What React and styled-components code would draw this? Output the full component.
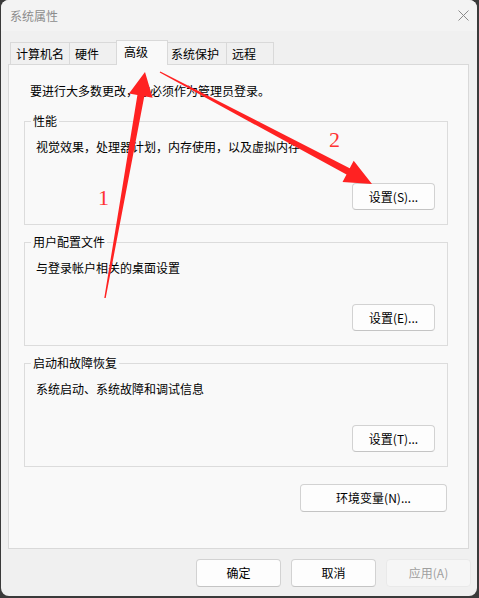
import React from 'react';
import styled, { createGlobalStyle } from 'styled-components';

const FONT = `"Noto Sans CJK SC", "Microsoft YaHei", "Noto Sans", sans-serif`;

const Global = createGlobalStyle`
  html, body { margin: 0; padding: 0; background: #3a3a3a; }
  body { width: 479px; height: 598px; overflow: hidden; }
  *, *::before, *::after { box-sizing: border-box; }
`;

const Stage = styled.div`
  position: relative;
  width: 479px;
  height: 598px;
  padding: 0 2px 2px 1px;
  font-family: ${FONT};
  font-size: 12px;
  color: #000;
`;

const Window = styled.div`
  width: 476px;
  height: 596px;
  background: #f0f0f0;
  border-radius: 8px;
  overflow: hidden;
  display: flex;
  flex-direction: column;
`;

const TitleBar = styled.div`
  flex: none;
  height: 31px;
  background: #f3f3f3;
  display: flex;
  align-items: center;
  justify-content: space-between;
  padding: 0 8px 0 9px;
`;

const Title = styled.span`
  font-size: 12px;
  line-height: 16px;
  color: #8c8c8c;
`;

const CloseIcon = styled.svg`
  display: block;
  width: 11px;
  height: 11px;
  margin-top: -1px;
`;

const Content = styled.div`
  flex: none;
  display: flex;
  flex-direction: column;
  padding: 9px 8px 0 7px;
`;

const TabRow = styled.div`
  position: relative;
  z-index: 1;
  display: flex;
  align-items: flex-end;
  height: 24px;
  margin-left: 2px;
`;

const Tab = styled.div`
  position: relative;
  z-index: ${p => (p.$active ? 2 : 1)};
  width: ${p => p.$w}px;
  height: ${p => (p.$active ? 25 : 22)}px;
  margin: 0 ${p => (p.$active ? -2 : 0)}px ${p => (p.$active ? -1 : 0)}px
    ${p => (p.$first ? 0 : p.$active ? -3 : -1)}px;
  padding: 3px 0 0 ${p => (p.$active ? 7 : 5)}px;
  border: 1px solid #d9d9d9;
  border-bottom: none;
  background: ${p => (p.$active ? '#f9f9f9' : '#f0f0f0')};
  font-size: 12px;
  line-height: 16px;
  white-space: nowrap;
`;

const Panel = styled.div`
  height: 485px;
  border: 1px solid #d9d9d9;
  background: #f9f9f9;
  padding: 18px 20px 0 15px;
  display: flex;
  flex-direction: column;
`;

const Intro = styled.p`
  margin: 0 0 14px 6px;
  font-size: 12px;
  line-height: 16px;
`;

const Group = styled.fieldset`
  margin: ${p => (p.$first ? 0 : 9)}px 0 0 0;
  padding: 0;
  min-width: 0;
  border: 1px solid #dcdcdc;
`;

const Legend = styled.legend`
  margin-left: 6px;
  padding: 0 2px;
  font-size: 12px;
  line-height: 16px;
`;

const GroupBody = styled.div`
  height: 95px;
  padding: 10px 12px 14px 11px;
  display: flex;
  flex-direction: column;
  align-items: stretch;
`;

const Desc = styled.div`
  font-size: 12px;
  line-height: 16px;
`;

const Button = styled.button`
  flex: none;
  width: ${p => p.$w}px;
  height: ${p => p.$h}px;
  padding: 0;
  font-family: ${FONT};
  font-size: 12px;
  line-height: 16px;
  color: ${p => (p.disabled ? '#9f9f9f' : '#000')};
  background: ${p => (p.disabled ? '#f6f6f6' : '#fdfdfd')};
  border: 1px solid ${p => (p.disabled ? '#e9e9e9' : '#d2d2d2')};
  border-bottom-color: ${p => (p.disabled ? '#e9e9e9' : '#c4c4c4')};
  border-radius: 4px;
  align-self: ${p => (p.$end ? 'flex-end' : 'auto')};
  margin-top: ${p => p.$mt || 0};
  margin-right: ${p => p.$mr || 0};
`;

const Footer = styled.div`
  flex: none;
  display: flex;
  justify-content: flex-end;
  gap: 10px;
  padding: 10px 6px 0 0;
`;

const Overlay = styled.svg`
  position: absolute;
  left: 0;
  top: 0;
  width: 479px;
  height: 598px;
  pointer-events: none;
`;

const Num = styled.text`
  font-family: "Liberation Serif", "Times New Roman", serif;
  font-size: 22px;
  fill: #ff3333;
`;

const tabs = [
  { label: '计算机名', w: 60 },
  { label: '硬件', w: 50 },
  { label: '高级', w: 52, active: true },
  { label: '系统保护', w: 62 },
  { label: '远程', w: 48 },
];

const groups = [
  { title: '性能', desc: '视觉效果，处理器计划，内存使用，以及虚拟内存', btn: '设置(S)...' },
  { title: '用户配置文件', desc: '与登录帐户相关的桌面设置', btn: '设置(E)...' },
  { title: '启动和故障恢复', desc: '系统启动、系统故障和调试信息', btn: '设置(T)...' },
];

export default function App() {
  return (
    <>
      <Global />
      <Stage>
        <Window>
          <TitleBar>
            <Title>系统属性</Title>
            <CloseIcon viewBox="0 0 11 11">
              <path d="M0.5 0.5 L10.5 10.5 M10.5 0.5 L0.5 10.5" stroke="#8a8a8a" strokeWidth="1" fill="none" />
            </CloseIcon>
          </TitleBar>
          <Content>
            <TabRow>
              {tabs.map((t, i) => (
                <Tab key={t.label} $w={t.w} $active={t.active} $first={i === 0}>
                  {t.label}
                </Tab>
              ))}
            </TabRow>
            <Panel>
              <Intro>要进行大多数更改，你必须作为管理员登录。</Intro>
              {groups.map((g, i) => (
                <Group key={g.title} $first={i === 0}>
                  <Legend>{g.title}</Legend>
                  <GroupBody>
                    <Desc>{g.desc}</Desc>
                    <Button $w={83} $h={27} $end $mt="auto">{g.btn}</Button>
                  </GroupBody>
                </Group>
              ))}
              <Button $w={147} $h={28} $end $mt="17px" $mr="1px">环境变量(N)...</Button>
            </Panel>
          </Content>
          <Footer>
            <Button $w={85} $h={28}>确定</Button>
            <Button $w={85} $h={28}>取消</Button>
            <Button $w={85} $h={28} disabled>应用(A)</Button>
          </Footer>
        </Window>
        <Overlay viewBox="0 0 479 598">
          <polygon
            fill="#ff2222"
            points="105.7,298.1 144.3,96.2 152.6,97.7 145,72 129,93.5 137.4,95 104.3,297.9"
          />
          <polygon
            fill="#ff2222"
            points="160.3,71.4 349.7,168.3 353.7,160.8 372,184 342.5,182 346.5,174.5 159.7,72.6"
          />
          <Num x="98" y="205">1</Num>
          <Num x="329" y="147">2</Num>
        </Overlay>
      </Stage>
    </>
  );
}
